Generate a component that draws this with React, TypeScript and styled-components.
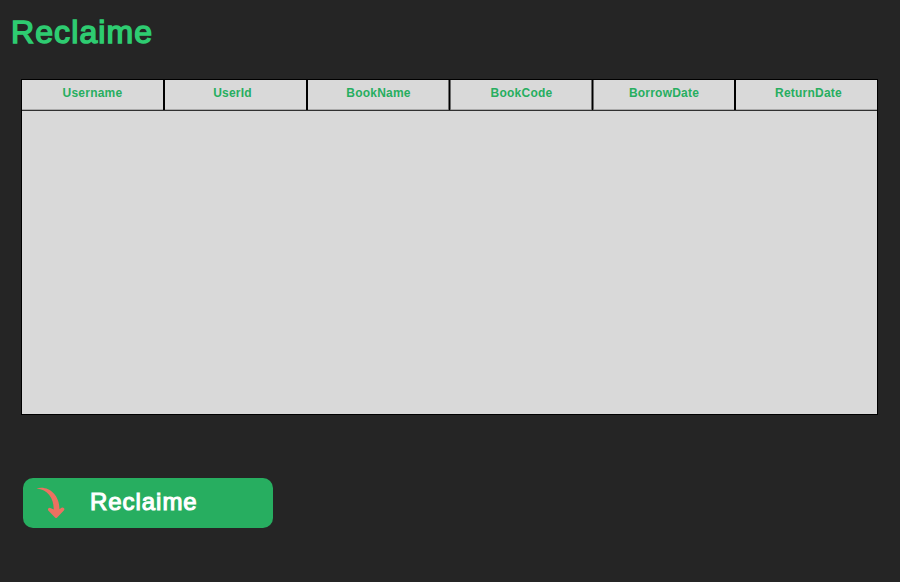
import React from "react";
import styled, { createGlobalStyle } from "styled-components";

const GlobalStyle = createGlobalStyle`
  body {
    margin: 0;
    background: #252525;
    font-family: "Liberation Sans", Arial, sans-serif;
  }
`;

const Page = styled.main`
  box-sizing: border-box;
  width: 900px;
  height: 582px;
  padding: 14px 22px 0 21px;
  background: #252525;
  overflow: hidden;
`;

const Title = styled.h1`
  margin: 0 0 29px -10px;
  height: 36px;
  font-size: 32px;
  line-height: 36px;
  font-weight: 400;
  letter-spacing: 1.1px;
  color: #2ecc71;
  -webkit-text-stroke: 1.5px #2ecc71;
`;

const Table = styled.section`
  box-sizing: border-box;
  width: 857px;
  height: 336px;
  border: 1px solid #000;
  background: #d9d9d9;
`;

const HeaderRow = styled.div`
  box-sizing: border-box;
  display: grid;
  grid-template-columns: 143px 143px 143px 143px 142px 141px;
  height: 31px;
  border-bottom: 1px solid #303030;
  box-shadow: inset 0 -1px #aaa;
`;

const dividers = {
  solid: "linear-gradient(to left, #000 2px, transparent 2px)",
  soft: "linear-gradient(to left, #6c6c6c 1px, #000 1px 2px, #6c6c6c 2px 3px, transparent 3px)",
  none: "none",
};

const HeaderCell = styled.div<{
  $shift: number;
  $divider: keyof typeof dividers;
}>`
  box-sizing: border-box;
  padding: 6px 2px 0 0;
  background: ${({ $divider }) => dividers[$divider]};
  text-align: center;
  text-indent: ${({ $shift }) => $shift * 2}px;
  font-size: 12px;
  line-height: 14px;
  font-weight: 700;
  letter-spacing: 0.22px;
  color: #27ae60;
`;

const ReclaimeButton = styled.button`
  display: flex;
  align-items: center;
  width: 250px;
  height: 50px;
  margin: 63px 0 0 2px;
  padding: 0;
  border: 0;
  border-radius: 10px;
  background: #27ae60;
  font: inherit;
`;

const ArrowIcon = styled.svg`
  flex: none;
  width: 50px;
  height: 50px;
  margin-right: 17px;
`;

const ButtonLabel = styled.span`
  margin-top: -2px;
  font-size: 24px;
  line-height: 28px;
  letter-spacing: 0.95px;
  color: #fff;
  -webkit-text-stroke: 1.1px #fff;
`;

const columns = [
  { name: "Username", shift: 0, divider: "solid" },
  { name: "UserId", shift: -3, divider: "solid" },
  { name: "BookName", shift: 0, divider: "soft" },
  { name: "BookCode", shift: 0, divider: "soft" },
  { name: "BorrowDate", shift: 0, divider: "solid" },
  { name: "ReturnDate", shift: 3, divider: "none" },
] as const;

export default function App() {
  return (
    <>
      <GlobalStyle />
      <Page>
        <Title>Reclaime</Title>
        <Table>
          <HeaderRow>
            {columns.map(({ name, shift, divider }) => (
              <HeaderCell key={name} $shift={shift} $divider={divider}>
                {name}
              </HeaderCell>
            ))}
          </HeaderRow>
        </Table>
        <ReclaimeButton type="button">
          <ArrowIcon viewBox="0 0 50 50" aria-hidden="true">
            <path
              d="M13.5 10.5C24.5 7.2 36.5 15.8 36.5 31.3L38.5 29.8Q39.9 29 41 30.2Q41.9 31.5 40.8 32.5L34.2 39.4Q33.1 40.5 32 39.4L25.5 32.8Q24.4 31.5 25.5 30.3Q26.6 29.2 28 30.2L30.7 31.5C31 20.5 25 11.5 13.5 10.5Z"
              fill="#ed7161"
            />
          </ArrowIcon>
          <ButtonLabel>Reclaime</ButtonLabel>
        </ReclaimeButton>
      </Page>
    </>
  );
}
